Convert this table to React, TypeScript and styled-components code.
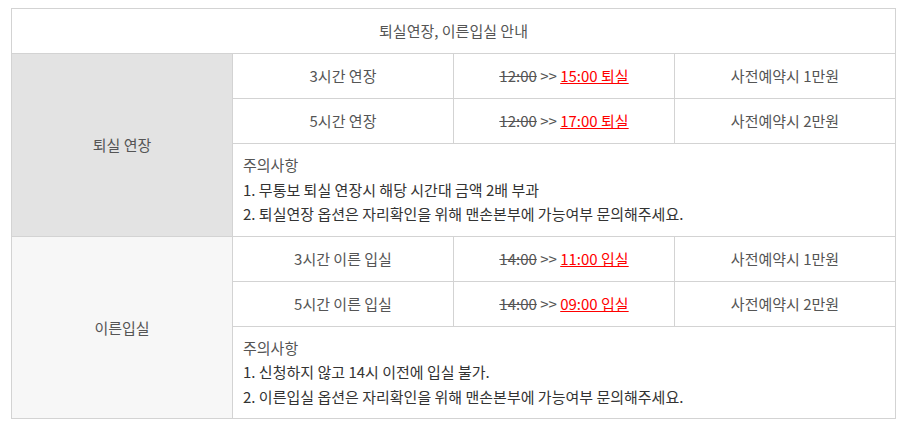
import styled, { createGlobalStyle } from "styled-components";

const GlobalStyle = createGlobalStyle`
  body {
    margin: 8px;
    background: #fff;
    font-family: "Noto Sans CJK KR", "Noto Sans", sans-serif;
  }
`;

interface Opcao {
  nome: string;
  antes: string;
  depois: string;
  preco: string;
}

interface Grupo {
  titulo: string;
  fundo: string;
  opcoes: Opcao[];
  notas: string[];
}

const grupos: Grupo[] = [
  {
    titulo: "퇴실 연장",
    fundo: "#e3e3e3",
    opcoes: [
      { nome: "3시간 연장", antes: "12:00", depois: "15:00 퇴실", preco: "사전예약시 1만원" },
      { nome: "5시간 연장", antes: "12:00", depois: "17:00 퇴실", preco: "사전예약시 2만원" },
    ],
    notas: [
      "1. 무통보 퇴실 연장시 해당 시간대 금액 2배 부과",
      "2. 퇴실연장 옵션은 자리확인을 위해 맨손본부에 가능여부 문의해주세요.",
    ],
  },
  {
    titulo: "이른입실",
    fundo: "#f7f7f7",
    opcoes: [
      { nome: "3시간 이른 입실", antes: "14:00", depois: "11:00 입실", preco: "사전예약시 1만원" },
      { nome: "5시간 이른 입실", antes: "14:00", depois: "09:00 입실", preco: "사전예약시 2만원" },
    ],
    notas: [
      "1. 신청하지 않고 14시 이전에 입실 불가.",
      "2. 이른입실 옵션은 자리확인을 위해 맨손본부에 가능여부 문의해주세요.",
    ],
  },
];

export default function App() {
  return (
    <>
      <GlobalStyle />
      <TabelaSld>
        <colgroup>
          <col style={{ width: "25%" }} />
          <col style={{ width: "25%" }} />
          <col style={{ width: "25%" }} />
          <col style={{ width: "25%" }} />
        </colgroup>
        <tbody>
          <tr>
            <TituloSld colSpan={4}>퇴실연장, 이른입실 안내</TituloSld>
          </tr>
          {grupos.map((grupo) => [
            ...grupo.opcoes.map((opcao, i) => (
              <tr key={grupo.titulo + opcao.nome}>
                {i === 0 && (
                  <GrupoSld rowSpan={grupo.opcoes.length + 1} $fundo={grupo.fundo}>
                    {grupo.titulo}
                  </GrupoSld>
                )}
                <CelulaSld>{opcao.nome}</CelulaSld>
                <CelulaSld>
                  <AntesSld>{opcao.antes}</AntesSld> <SetaSld>&gt;&gt;</SetaSld>{" "}
                  <DepoisSld>{opcao.depois}</DepoisSld>
                </CelulaSld>
                <CelulaSld>{opcao.preco}</CelulaSld>
              </tr>
            )),
            <tr key={grupo.titulo + "notas"}>
              <NotasSld colSpan={3}>
                <NotaTituloSld>주의사항</NotaTituloSld>
                {grupo.notas.map((nota) => (
                  <NotaSld key={nota}>{nota}</NotaSld>
                ))}
              </NotasSld>
            </tr>,
          ])}
        </tbody>
      </TabelaSld>
    </>
  );
}

const TabelaSld = styled.table`
  width: 885px;
  margin: 0 3px;
  border-collapse: collapse;
  table-layout: fixed;
  font-size: 15px;
  color: #555;

  td {
    border: 1px solid #d3d3d3;
    box-sizing: border-box;
  }
`;

const TituloSld = styled.td`
  height: 45px;
  padding: 0 0 1px;
  text-align: center;
  background: #fff;
`;

const GrupoSld = styled.td<{ $fundo: string }>`
  background: ${(props) => props.$fundo};
  text-align: center;
  padding: 0;
`;

const CelulaSld = styled.td`
  height: 45px;
  padding: 0 0 1px;
  text-align: center;
`;

const AntesSld = styled.span`
  text-decoration: line-through;
`;

const SetaSld = styled.span`
  letter-spacing: 0;
`;

const DepoisSld = styled.span`
  color: #ff0000;
  text-decoration: underline;
`;

const NotasSld = styled.td`
  padding: 9px 10px 9px;
  vertical-align: top;
  line-height: 24.5px;
`;

const NotaTituloSld = styled.div`
  color: #555;
`;

const NotaSld = styled.div`
  color: #333;
`;
